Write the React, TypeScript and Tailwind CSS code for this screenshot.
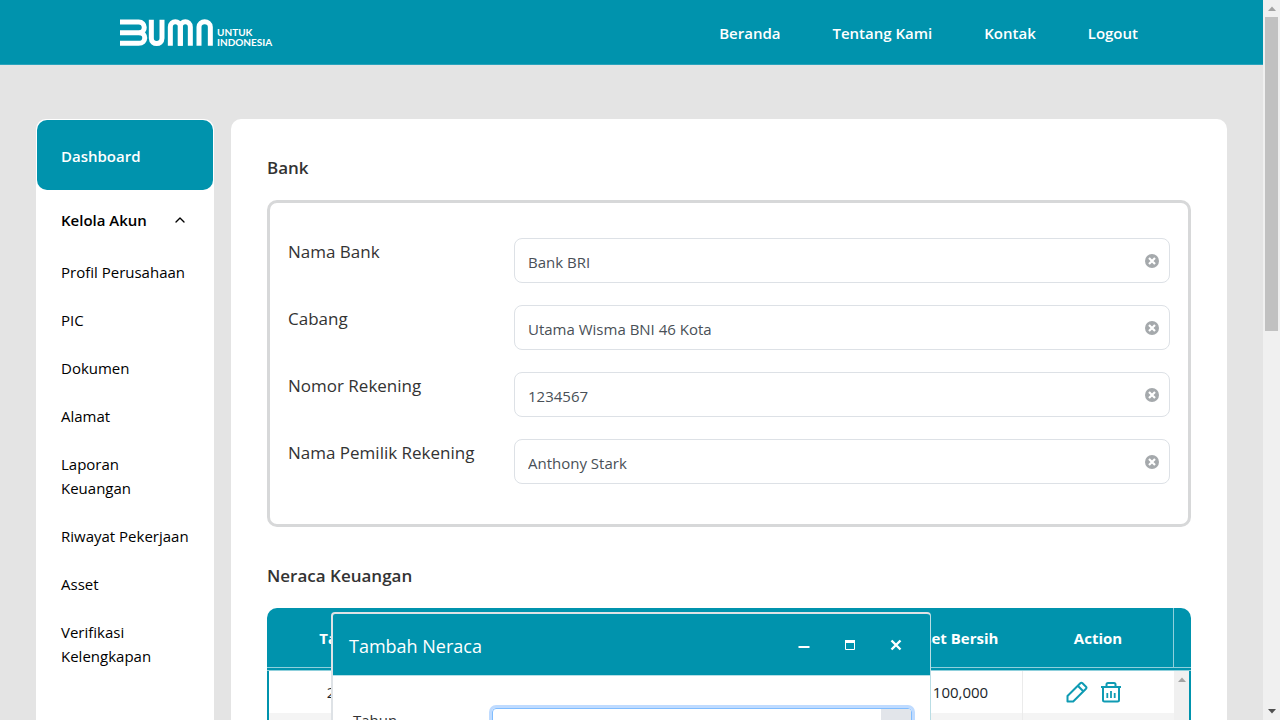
import { ChevronUp } from 'lucide-react';

const navLinks = ['Beranda', 'Tentang Kami', 'Kontak', 'Logout'];

const accountLinks = [
  'Profil Perusahaan',
  'PIC',
  'Dokumen',
  'Alamat',
  'Laporan Keuangan',
  'Riwayat Pekerjaan',
  'Asset',
  'Verifikasi Kelengkapan',
];

const bankFields = [
  { id: 'nama-bank', label: 'Nama Bank', value: 'Bank BRI' },
  { id: 'cabang', label: 'Cabang', value: 'Utama Wisma BNI 46 Kota' },
  { id: 'nomor-rekening', label: 'Nomor Rekening', value: '1234567' },
  { id: 'nama-pemilik', label: 'Nama Pemilik Rekening', value: 'Anthony Stark' },
];

function Logo() {
  return (
    <a href="#" aria-label="BUMN Untuk Indonesia" className="flex items-end gap-[3px] pt-0.5 text-white">
      <svg width="94" height="28" viewBox="0 0 282 84" fill="none" stroke="currentColor" strokeWidth="15">
        <path d="M0 9H56C78 9 78 41 58 41H0" />
        <path d="M58 41C80 41 80 73 56 73H0" />
        <path d="M94 2V58C94 79 126 79 126 58V2" />
        <path d="M151 80V24C151 3 181 3 181 24V80" />
        <path d="M181 80V24C181 3 211 3 211 24V80" />
        <path d="M237 80V24C237 3 271 3 271 24V80" />
      </svg>
      <span className="flex flex-col font-[Lato,sans-serif] text-[10px] font-bold leading-[10px]">
        <span>UNTUK</span>
        <span>INDONESIA</span>
      </span>
    </a>
  );
}

function Header() {
  return (
    <header className="flex h-[65px] shrink-0 items-center justify-between border-b border-[#2ba3bc] bg-[#0093ad] pl-[120px] pr-[125px]">
      <Logo />
      <nav className="flex gap-[52px] pt-0.5 text-[15px] font-semibold text-white">
        {navLinks.map((label) => (
          <a key={label} href="#">
            {label}
          </a>
        ))}
      </nav>
    </header>
  );
}

function Sidebar() {
  return (
    <aside className="w-[178px] shrink-0 rounded-t-[10px] bg-white p-px text-[15px] leading-6 text-black">
      <a href="#" className="flex h-[70px] items-center rounded-[10px] bg-[#0093ad] px-6 pt-0.5 font-semibold text-white">
        Dashboard
      </a>
      <button type="button" className="flex h-[60px] w-full items-center justify-between pl-6 pr-[25px] font-semibold">
        Kelola Akun
        <ChevronUp size={16} strokeWidth={2} />
      </button>
      <ul className="flex flex-col gap-6 pl-6 pr-[22px] pt-2.5">
        {accountLinks.map((label) => (
          <li key={label}>
            <a href="#" className="block">
              {label}
            </a>
          </li>
        ))}
      </ul>
    </aside>
  );
}

function ClearIcon() {
  return (
    <svg width="14" height="14" viewBox="0 0 14 14">
      <circle cx="7" cy="7" r="7" fill="#a5a9ac" />
      <path d="M4 4L10 10M10 4L4 10" stroke="#fff" strokeWidth="2.2" />
    </svg>
  );
}

function BankForm() {
  return (
    <form className="mt-[19px] flex flex-col gap-[22px] rounded-[10px] border-[3px] border-[#d7d8d9] px-[18px] pb-10 pt-[35px]">
      {bankFields.map((field) => (
        <div key={field.id} className="flex">
          <label htmlFor={field.id} className="w-[226px] shrink-0 text-[17px] leading-7">
            {field.label}
          </label>
          <div className="flex h-[45px] flex-1 items-center rounded-lg border border-[#dde1e6] pl-[13px] pr-2.5">
            <input
              id={field.id}
              defaultValue={field.value}
              className="min-w-0 flex-1 bg-transparent pt-1 text-[15px] text-[#495057] outline-none"
            />
            <button type="button" aria-label="Hapus">
              <ClearIcon />
            </button>
          </div>
        </div>
      ))}
    </form>
  );
}

function PencilIcon() {
  return (
    <svg width="22" height="22" viewBox="0 0 22 22" fill="none" stroke="currentColor" strokeWidth="2" strokeLinejoin="round">
      <path d="M1.5 20.5V15L14.3 2.2C15 1.5 15.8 1.5 16.5 2.2L20 5.7C20.6 6.3 20.6 7 20 7.7L7.2 20.5Z" />
      <path d="M11.8 4.8L17.3 10.3" />
    </svg>
  );
}

function TrashIcon() {
  return (
    <svg width="20" height="22" viewBox="0 0 20 22" fill="none" stroke="currentColor" strokeWidth="2">
      <path d="M0 6H20" />
      <path d="M5.5 5V3.5C5.5 2.5 6 2 7 2H13C14 2 14.5 2.5 14.5 3.5V5" />
      <path d="M2 6V19C2 20 2.5 20.5 3.5 20.5H16.5C17.5 20.5 18 20 18 19V6" />
      <path d="M6.3 12V17M10 10V17M13.7 12V17" strokeWidth="1.8" />
    </svg>
  );
}

function BalanceTable() {
  return (
    <div className="overflow-hidden rounded-t-[10px] bg-[#0093ad]">
      <table className="w-full table-fixed border-separate border-spacing-0 text-center text-[15px] text-[#212529]">
        <colgroup>
          <col className="w-[152px]" />
          <col />
          <col className="w-[134px]" />
          <col className="w-[151px]" />
          <col className="w-[17px]" />
        </colgroup>
        <thead>
          <tr className="h-[60px] font-bold text-white">
            <th scope="col" className="border-b border-[#8fd0dc] p-0 pt-0.5">
              Tahun
            </th>
            <td className="border-b border-[#8fd0dc] p-0" />
            <th scope="col" className="border-b border-[#8fd0dc] p-0 pt-0.5">
              Aset Bersih
            </th>
            <th scope="col" className="border-b border-r border-[#8fd0dc] p-0 pt-0.5">
              Action
            </th>
            <td className="border-b border-[#8fd0dc] p-0" />
          </tr>
          <tr aria-hidden="true">
            <td colSpan={5} className="h-[3px] border-b border-[#8fd0dc] p-0" />
          </tr>
        </thead>
        <tbody>
          <tr className="h-[42px] bg-white">
            <td className="border-l-2 border-[#0093ad] p-0">2021</td>
            <td className="p-0" />
            <td className="border-r border-[#ebebeb] p-0 pl-2.5">100,000</td>
            <td className="p-0">
              <div className="flex items-center justify-center gap-[13px] pr-2.5 text-[#0f9bb3]">
                <button type="button" aria-label="Ubah">
                  <PencilIcon />
                </button>
                <button type="button" aria-label="Hapus">
                  <TrashIcon />
                </button>
              </div>
            </td>
            <td rowSpan={2} className="border-r-2 border-[#0093ad] bg-[#f0f0f0] p-0 pt-1.5 align-top">
              <svg width="8" height="5" viewBox="0 0 8 5" className="mx-auto">
                <path d="M0 5L4 0.5L8 5Z" fill="#a3a3a3" />
              </svg>
            </td>
          </tr>
          <tr className="h-[42px] bg-[#f4f4f4]">
            <td className="border-l-2 border-[#0093ad] p-0" />
            <td className="p-0" />
            <td className="border-r border-[#ebebeb] p-0" />
            <td className="p-0" />
          </tr>
        </tbody>
      </table>
    </div>
  );
}

function AddBalanceDialog() {
  return (
    <div
      role="dialog"
      aria-labelledby="dialog-title"
      className="absolute left-16 top-1 w-[600px] overflow-hidden rounded border-2 border-r border-[#dee2e6] border-r-[#b9dde4] bg-white"
    >
      <div className="flex h-[62px] items-center justify-between border-b border-[#b5dfe7] bg-[#0093ad] pl-4 pr-7 text-white">
        <h3 id="dialog-title" className="pt-1 text-[18px]">
          Tambah Neraca
        </h3>
        <div className="flex gap-[34px]">
          <button type="button" aria-label="Perkecil">
            <svg width="12" height="12" viewBox="0 0 12 12">
              <path d="M0.5 8H11.5" stroke="currentColor" strokeWidth="2" />
            </svg>
          </button>
          <button type="button" aria-label="Perbesar">
            <svg width="12" height="12" viewBox="0 0 12 12">
              <path d="M1.5 1.5H10.5V10.5H1.5Z" fill="none" stroke="currentColor" />
              <path d="M1 2.5H11" stroke="currentColor" strokeWidth="3" />
            </svg>
          </button>
          <button type="button" aria-label="Tutup">
            <svg width="12" height="12" viewBox="0 0 12 12">
              <path d="M1.5 1.5L10.5 10.5M10.5 1.5L1.5 10.5" stroke="currentColor" strokeWidth="2.4" />
            </svg>
          </button>
        </div>
      </div>
      <div className="flex pb-6 pl-5 pr-[18px] pt-8 text-[#333]">
        <label htmlFor="tahun" className="w-[139px] shrink-0 text-[15px] leading-6">
          Tahun
        </label>
        <div className="flex h-[38px] flex-1 overflow-hidden rounded border border-[#80bdff] ring-3 ring-[#bfdbff]">
          <input id="tahun" className="min-w-0 flex-1 px-3 text-[15px] outline-none" />
          <button type="button" aria-label="Pilih" className="w-[30px] bg-[#e2e5ea]" />
        </div>
      </div>
    </div>
  );
}

function PageScrollbar() {
  return (
    <div aria-hidden="true" className="flex w-[17px] shrink-0 flex-col items-center justify-between bg-[#f0f0f0]">
      <div className="flex h-[17px] items-center">
        <svg width="8" height="5" viewBox="0 0 8 5">
          <path d="M0 5L4 0.5L8 5Z" fill="#a3a3a3" />
        </svg>
      </div>
      <div className="mb-auto h-[314px] w-[13px] bg-[#c1c1c1]" />
      <div className="flex h-[17px] items-center">
        <svg width="8" height="5" viewBox="0 0 8 5">
          <path d="M0 0L4 4.5L8 0Z" fill="#505050" />
        </svg>
      </div>
    </div>
  );
}

export default function App() {
  return (
    <div className="flex h-screen overflow-hidden bg-[#e4e4e4] font-['Open_Sans',sans-serif] text-[#333]">
      <div className="flex min-w-0 flex-1 flex-col overflow-hidden">
        <Header />
        <div className="flex min-h-0 flex-1 gap-[17px] px-9 pt-[54px]">
          <Sidebar />
          <main className="min-w-0 flex-1 rounded-t-[10px] bg-white px-9 pt-9">
            <h2 className="text-[17px] font-semibold leading-[26px]">Bank</h2>
            <BankForm />
            <h2 className="mt-9 text-[17px] font-semibold leading-[26px]">Neraca Keuangan</h2>
            <div className="relative mt-[19px]">
              <BalanceTable />
              <AddBalanceDialog />
            </div>
          </main>
        </div>
      </div>
      <PageScrollbar />
    </div>
  );
}
